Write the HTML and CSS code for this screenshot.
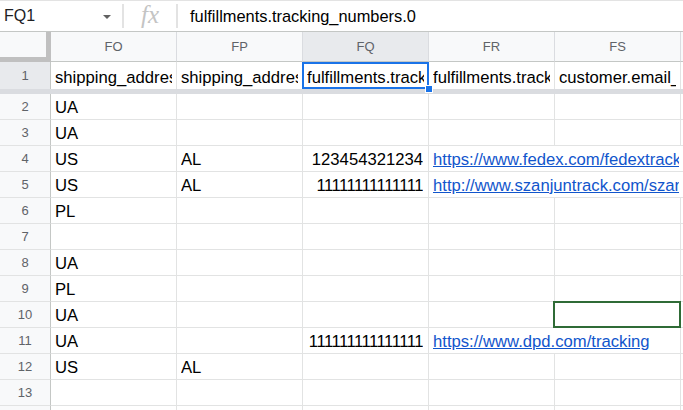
FILE: index.html
```html
<!DOCTYPE html>
<html>
<head>
<meta charset="utf-8">
<link rel="stylesheet" href="styles.css">
</head>
<body>
<div class="fbar">
  <div class="namebox"><span>FQ1</span><span class="caret"></span></div>
  <div class="sep"></div>
  <div class="fx">fx</div>
  <div class="sep"></div>
  <div class="formula">fulfillments.tracking_numbers.0</div>
</div>
<div class="sheet">
  <div class="corner"></div>
  <div class="ch">FO</div>
  <div class="ch">FP</div>
  <div class="ch sel">FQ</div>
  <div class="ch">FR</div>
  <div class="ch">FS</div>
  <div class="ch end"></div>

  <div class="rh r1 sel">1</div>
  <div class="c r1"><span class="t">shipping_address.country_code</span></div>
  <div class="c r1"><span class="t">shipping_address.province_code</span></div>
  <div class="c r1 active"><span class="t">fulfillments.tracking_numbers.0</span><span class="handle"></span></div>
  <div class="c r1"><span class="t">fulfillments.tracking_urls.0</span></div>
  <div class="c r1"><span class="t">customer.email_marketing_consent</span></div>
  <div class="c r1 x"></div>

  <div class="freeze"></div>

  <div class="rh">2</div><div class="c"><span class="t">UA</span></div><div class="c"></div><div class="c"></div><div class="c"></div><div class="c"></div><div class="c x"></div>
  <div class="rh">3</div><div class="c"><span class="t">UA</span></div><div class="c"></div><div class="c"></div><div class="c"></div><div class="c"></div><div class="c x"></div>
  <div class="rh">4</div><div class="c"><span class="t">US</span></div><div class="c"><span class="t">AL</span></div><div class="c num"><span class="t">123454321234</span></div><div class="c span3"><span class="t link">https://www.fedex.com/fedextrack/?trknbr=123454321234</span></div>
  <div class="rh">5</div><div class="c"><span class="t">US</span></div><div class="c"><span class="t">AL</span></div><div class="c num"><span class="t ones">11111111111111</span></div><div class="c span3"><span class="t link">http://www.szanjuntrack.com/szanjun/track</span></div>
  <div class="rh">6</div><div class="c"><span class="t">PL</span></div><div class="c"></div><div class="c"></div><div class="c"></div><div class="c"></div><div class="c x"></div>
  <div class="rh">7</div><div class="c"></div><div class="c"></div><div class="c"></div><div class="c"></div><div class="c"></div><div class="c x"></div>
  <div class="rh">8</div><div class="c"><span class="t">UA</span></div><div class="c"></div><div class="c"></div><div class="c"></div><div class="c"></div><div class="c x"></div>
  <div class="rh">9</div><div class="c"><span class="t">PL</span></div><div class="c"></div><div class="c"></div><div class="c"></div><div class="c"></div><div class="c x"></div>
  <div class="rh">10</div><div class="c"><span class="t">UA</span></div><div class="c"></div><div class="c"></div><div class="c"></div><div class="c cursor"></div><div class="c x"></div>
  <div class="rh">11</div><div class="c"><span class="t">UA</span></div><div class="c"></div><div class="c num"><span class="t ones">111111111111111</span></div><div class="c span2"><span class="t link">https://www.dpd.com/tracking</span></div><div class="c x"></div>
  <div class="rh">12</div><div class="c"><span class="t">US</span></div><div class="c"><span class="t">AL</span></div><div class="c"></div><div class="c"></div><div class="c"></div><div class="c x"></div>
  <div class="rh">13</div><div class="c"></div><div class="c"></div><div class="c"></div><div class="c"></div><div class="c"></div><div class="c x"></div>
  <div class="rh">14</div><div class="c"></div><div class="c"></div><div class="c"></div><div class="c"></div><div class="c"></div><div class="c x"></div>
</div>
</body>
</html>
```

FILE: styles.css
```css
* { box-sizing: border-box; }

body {
  margin: 0;
  width: 683px;
  height: 410px;
  overflow: hidden;
  background: #ffffff;
  font-family: "Liberation Sans", Arial, sans-serif;
}

/* formula bar */
.fbar {
  display: flex;
  height: 32px;
  border-top: 1px solid #e3e3e3;
  border-bottom: 1px solid #c4c7c5;
}

.namebox {
  width: 122px;
  display: flex;
  align-items: center;
  justify-content: space-between;
  padding: 0 11px 0 4px;
  font-size: 16px;
  color: #202124;
}

.caret {
  width: 0;
  height: 0;
  border-left: 4px solid transparent;
  border-right: 4px solid transparent;
  border-top: 4px solid #616161;
  margin-top: 2px;
}

.sep {
  width: 2px;
  background: #e3e3e3;
  margin: 3px 0;
}

.fx {
  width: 52px;
  display: flex;
  align-items: center;
  justify-content: center;
  font-family: "Liberation Serif", serif;
  font-style: italic;
  font-size: 25px;
  color: #c4c4c4;
  padding-bottom: 2px;
}

.formula {
  padding-left: 12px;
  display: flex;
  align-items: center;
  font-size: 16.4px;
  color: #000;
}

/* grid */
.sheet {
  display: grid;
  grid-template-columns: 51px repeat(5, 126px) 1fr;
  grid-template-rows: 30px 27px 5px repeat(13, 26px);
}

.corner {
  background: #f8f9fa;
  border-right: 5px solid #c0c0c0;
  border-bottom: 5px solid #c0c0c0;
}

.ch {
  background: #f8f9fa;
  border-right: 1px solid #dadce0;
  border-bottom: 1px solid #c4c7c5;
  display: flex;
  align-items: center;
  justify-content: center;
  font-size: 13px;
  color: #5f6368;
}

.ch.sel { background: #e8eaed; }
.ch.end { border-right: none; }

.rh {
  background: #f8f9fa;
  border-right: 1px solid #c4c7c5;
  border-bottom: 1px solid #e2e3e3;
  display: flex;
  align-items: center;
  justify-content: center;
  font-size: 13px;
  color: #5f6368;
}

.rh.sel { background: #e8eaed; }
.rh.r1 { border-bottom: none; }

.c {
  display: flex;
  align-items: flex-end;
  min-width: 0;
  padding: 0 4px 2px 4px;
  border-right: 1px solid #e2e3e3;
  border-bottom: 1px solid #e2e3e3;
  font-size: 16.67px;
  line-height: 19px;
  color: #000;
}

.c.r1 { border-bottom: none; }
.c.x { border-right: none; padding: 0; }

.t {
  flex: 1;
  min-width: 0;
  overflow: hidden;
  white-space: nowrap;
}

.num { padding-right: 5px; }
.num .t { text-align: right; }
.ones { letter-spacing: -0.5px; }

.link {
  color: #1155cc;
  text-decoration: underline;
}

.span3 { grid-column: span 3; border-right: none; }
.span2 { grid-column: span 2; }

.freeze {
  grid-column: 1 / -1;
  background: #dadce0;
}

/* active selection */
.active { position: relative; }

.active::after {
  content: "";
  position: absolute;
  top: 0;
  bottom: 0;
  left: -1px;
  right: -1px;
  border: 2px solid #1a73e8;
  z-index: 2;
}

.handle {
  position: absolute;
  right: -5px;
  bottom: -4px;
  width: 8px;
  height: 8px;
  background: #1a73e8;
  border: 1px solid #ffffff;
  z-index: 3;
}

/* collaborator cursor */
.cursor { position: relative; }

.cursor::after {
  content: "";
  position: absolute;
  top: -1px;
  bottom: -1px;
  left: -2px;
  right: -1px;
  border: 2px solid #2f6b36;
  z-index: 2;
}
```
